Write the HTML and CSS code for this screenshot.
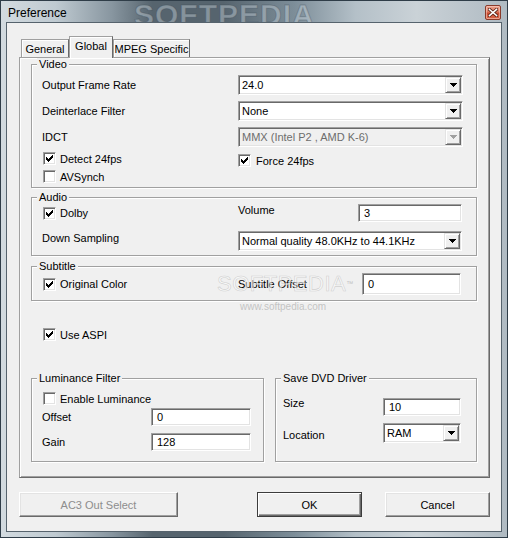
FILE: index.html
```html
<!DOCTYPE html>
<html>
<head>
<meta charset="utf-8">
<title>Preference</title>
<link rel="stylesheet" href="styles.css">
</head>
<body>
<div class="window">
  <div class="titlebar">
    <span class="title">Preference</span>
    <span class="wm-title">SOFTPEDIA</span>
    <span class="close">
      <svg width="10" height="9" viewBox="0 0 10 9"><path d="M1.5 1.5 L8.5 7.5 M8.5 1.5 L1.5 7.5" stroke="#5a2418" stroke-width="3.2" stroke-linecap="square"/><path d="M1.5 1.5 L8.5 7.5 M8.5 1.5 L1.5 7.5" stroke="#ffffff" stroke-width="1.6" stroke-linecap="square"/></svg>
    </span>
  </div>
  <div class="client">
    <div class="tabs">
      <div class="tab">General</div>
      <div class="tab active">Global</div>
      <div class="tab">MPEG Specific</div>
    </div>
    <div class="panel">
      <div class="group g-video">
        <div class="gtitle">Video</div>
        <div class="row r-first">
          <span class="lbl">Output Frame Rate</span>
          <div class="combo c-wide"><span class="val">24.0</span><span class="drop"><svg width="7" height="4" viewBox="0 0 7 4" shape-rendering="crispEdges"><path d="M0 0h7v1H0zM1 1h5v1H1zM2 2h3v1H2zM3 3h1v1H3z"/></svg></span></div>
        </div>
        <div class="row r-next">
          <span class="lbl">Deinterlace Filter</span>
          <div class="combo c-wide"><span class="val">None</span><span class="drop"><svg width="7" height="4" viewBox="0 0 7 4" shape-rendering="crispEdges"><path d="M0 0h7v1H0zM1 1h5v1H1zM2 2h3v1H2zM3 3h1v1H3z"/></svg></span></div>
        </div>
        <div class="row r-next">
          <span class="lbl">IDCT</span>
          <div class="combo c-wide disabled"><span class="val">MMX (Intel P2 , AMD K-6)</span><span class="drop"><svg width="7" height="4" viewBox="0 0 7 4" shape-rendering="crispEdges"><path d="M0 0h7v1H0zM1 1h5v1H1zM2 2h3v1H2zM3 3h1v1H3z"/></svg></span></div>
        </div>
        <div class="row r-checks">
          <div class="cell">
            <span class="chk"><span class="box"><svg width="9" height="9" viewBox="0 0 9 9" shape-rendering="crispEdges"><path d="M7 1h1v1H7zM6 2h2v1H6zM1 3h1v1H1zM5 3h3v1H5zM1 4h2v1H1zM4 4h3v1H4zM1 5h5v1H1zM2 6h3v1H2zM3 7h1v1H3z"/></svg></span>Detect 24fps</span>
          </div>
          <span class="chk force"><span class="box"><svg width="9" height="9" viewBox="0 0 9 9" shape-rendering="crispEdges"><path d="M7 1h1v1H7zM6 2h2v1H6zM1 3h1v1H1zM5 3h3v1H5zM1 4h2v1H1zM4 4h3v1H4zM1 5h5v1H1zM2 6h3v1H2zM3 7h1v1H3z"/></svg></span>Force 24fps</span>
        </div>
        <div class="row r-chk">
          <span class="chk indent"><span class="box"></span>AVSynch</span>
        </div>
      </div>

      <div class="group g-audio">
        <div class="gtitle">Audio</div>
        <div class="row r-vol">
          <div class="cell">
            <span class="chk"><span class="box"><svg width="9" height="9" viewBox="0 0 9 9" shape-rendering="crispEdges"><path d="M7 1h1v1H7zM6 2h2v1H6zM1 3h1v1H1zM5 3h3v1H5zM1 4h2v1H1zM4 4h3v1H4zM1 5h5v1H1zM2 6h3v1H2zM3 7h1v1H3z"/></svg></span>Dolby</span>
          </div>
          <span class="lbl-vol up">Volume</span>
          <div class="edit e-vol">3</div>
        </div>
        <div class="row r-ds">
          <span class="lbl up">Down Sampling</span>
          <div class="combo c-ds"><span class="val">Normal quality 48.0KHz to 44.1KHz</span><span class="drop"><svg width="7" height="4" viewBox="0 0 7 4" shape-rendering="crispEdges"><path d="M0 0h7v1H0zM1 1h5v1H1zM2 2h3v1H2zM3 3h1v1H3z"/></svg></span></div>
        </div>
      </div>

      <div class="group g-sub">
        <div class="gtitle">Subtitle</div>
        <div class="row r-sub">
          <div class="cell">
            <span class="chk"><span class="box"><svg width="9" height="9" viewBox="0 0 9 9" shape-rendering="crispEdges"><path d="M7 1h1v1H7zM6 2h2v1H6zM1 3h1v1H1zM5 3h3v1H5zM1 4h2v1H1zM4 4h3v1H4zM1 5h5v1H1zM2 6h3v1H2zM3 7h1v1H3z"/></svg></span>Original Color</span>
          </div>
          <span class="lbl-sub">Subtitle Offset</span>
          <div class="edit e-sub">0</div>
        </div>
      </div>

      <div class="aspi">
        <span class="chk"><span class="box"><svg width="9" height="9" viewBox="0 0 9 9" shape-rendering="crispEdges"><path d="M7 1h1v1H7zM6 2h2v1H6zM1 3h1v1H1zM5 3h3v1H5zM1 4h2v1H1zM4 4h3v1H4zM1 5h5v1H1zM2 6h3v1H2zM3 7h1v1H3z"/></svg></span>Use ASPI</span>
      </div>

      <div class="bottom">
        <div class="group g-lum">
          <div class="gtitle">Luminance Filter</div>
          <div class="row r-lumchk">
            <span class="chk indent"><span class="box"></span>Enable Luminance</span>
          </div>
          <div class="row r-off">
            <span class="lbl-lum">Offset</span>
            <div class="edit e-lum">0</div>
          </div>
          <div class="row r-gain">
            <span class="lbl-lum">Gain</span>
            <div class="edit e-lum">128</div>
          </div>
        </div>
        <div class="group g-dvd">
          <div class="gtitle">Save DVD Driver</div>
          <div class="row r-size">
            <span class="lbl-dvd up-more">Size</span>
            <div class="edit e-dvd">10</div>
          </div>
          <div class="row r-loc">
            <span class="lbl-dvd down">Location</span>
            <div class="combo c-loc"><span class="val">RAM</span><span class="drop"><svg width="7" height="4" viewBox="0 0 7 4" shape-rendering="crispEdges"><path d="M0 0h7v1H0zM1 1h5v1H1zM2 2h3v1H2zM3 3h1v1H3z"/></svg></span></div>
          </div>
        </div>
      </div>
    </div>

    <div class="buttons">
      <button class="btn btn-ac3" disabled>AC3 Out Select</button>
      <div class="btn-group">
        <button class="btn btn-ok">OK</button>
        <button class="btn btn-cancel">Cancel</button>
      </div>
    </div>

    <span class="wm-mid">SOFTPEDIA<sup>™</sup></span>
    <span class="wm-url">www.softpedia.com</span>
  </div>
</div>
</body>
</html>
```
FILE: styles.css
```css
html, body {
  margin: 0;
  padding: 0;
}
body {
  width: 508px;
  height: 538px;
  overflow: hidden;
  font-family: "Liberation Sans", Arial, sans-serif;
  font-size: 11px;
  color: #000;
}
.window {
  box-sizing: border-box;
  width: 508px;
  height: 538px;
  background: linear-gradient(90deg, #d3dbe0 0%, #bfcad1 11%, #8896a0 22%, #56646e 30%, #56646e 44%, #7d8e99 58%, #b4c0c8 70%, #cad2d7 82%, #afbac2 100%);
  box-shadow: inset 0 0 0 1px #2f3d48;
  display: flex;
  flex-direction: column;
}
.titlebar {
  position: relative;
  height: 22px;
  display: flex;
  align-items: center;
  overflow: hidden;
}
.title {
  margin: 4px 0 0 8px;
  font-size: 12px;
  color: #000;
  position: relative;
  z-index: 1;
}
.wm-title {
  position: absolute;
  left: 134px;
  top: 0px;
  font-size: 30px;
  line-height: 30px;
  font-weight: bold;
  letter-spacing: 1px;
  color: rgba(205, 216, 224, 0.42);
  -webkit-text-stroke: 1px rgba(60, 75, 86, 0.35);
}
.close {
  position: relative;
  z-index: 1;
  margin-left: auto;
  margin-right: 7px;
  align-self: flex-start;
  margin-top: 5px;
  box-sizing: border-box;
  width: 16px;
  height: 15px;
  border: 1px solid #8a3b2b;
  border-radius: 2px;
  background: linear-gradient(180deg, #eba28e 0%, #de7a60 45%, #c9492e 55%, #d8684c 100%);
  box-shadow: inset 0 0 0 1px rgba(255, 220, 210, 0.5);
  display: flex;
  align-items: center;
  justify-content: center;
}
.client {
  position: relative;
  box-sizing: border-box;
  height: 510px;
  margin: 0 6px 6px 6px;
  border: 1px solid #56636d;
  background: #f0f0f0;
}

/* tabs */
.tabs {
  display: flex;
  align-items: flex-end;
  height: 21px;
  margin: 13px 0 0 14px;
}
.tab {
  box-sizing: border-box;
  height: 18px;
  border: 1px solid #a0a0a0;
  border-right-color: #696969;
  border-bottom: none;
  box-shadow: inset 1px 1px 0 #fff;
  background: #f0f0f0;
  display: flex;
  align-items: center;
  justify-content: center;
  padding-top: 1px;
}
.tab:nth-child(1) { width: 48px; }
.tab:nth-child(2) { width: 44px; }
.tab:nth-child(3) { width: 77px; }
.tab.active {
  position: relative;
  z-index: 1;
  height: 22px;
  margin-bottom: -1px;
  padding-top: 0;
  padding-bottom: 4px;
}

.panel {
  box-sizing: border-box;
  width: 471px;
  height: 421px;
  margin-left: 12px;
  padding: 6px 0 0 11px;
  border: 1px solid;
  border-color: #a0a0a0 #696969 #696969 #a0a0a0;
  box-shadow: inset 1px 1px 0 #fff, inset -1px -1px 0 #a0a0a0;
  background: #f0f0f0;
}

/* group boxes */
.group {
  box-sizing: border-box;
  border: 1px solid #a0a0a0;
  box-shadow: 1px 1px 0 #fff, inset 1px 1px 0 #fff;
  width: 446px;
}
.gtitle {
  width: fit-content;
  height: 13px;
  line-height: 13px;
  margin: -7px 0 -6px -5px;
  padding: 0 2px;
  background: #f0f0f0;
}
.g-dvd .gtitle { margin-left: -2px; }
.g-video { padding: 0 13px 4px 10px; }
.g-audio { margin-top: 9px; padding: 0 13px 4px 10px; }
.g-sub { margin-top: 10px; padding: 0 13px 5px 10px; }

.row {
  display: flex;
  align-items: center;
}
.r-first { margin-top: 10px; height: 20px; }
.r-next { margin-top: 6px; height: 20px; }
.r-checks { margin-top: 5px; height: 18px; align-items: flex-start; }
.r-chk { height: 13px; }
.r-vol { margin-top: 6px; height: 18px; }
.r-ds { margin-top: 9px; height: 20px; }
.r-sub { margin-top: 6px; height: 22px; }

.lbl { width: 196px; flex: none; }
.cell { width: 196px; flex: none; }
.lbl-vol { width: 120px; flex: none; }
.lbl-sub { width: 124px; flex: none; }
.up { margin-bottom: 6px; }
.up-more { margin-bottom: 8px; }
.down { margin-top: 4px; }

/* checkbox */
.chk {
  display: flex;
  align-items: center;
  gap: 4px;
  height: 13px;
  white-space: nowrap;
}
.cell .chk, .indent { margin-left: 1px; }
.force { margin-top: 2px; gap: 5px; }
.box {
  box-sizing: border-box;
  width: 13px;
  height: 13px;
  flex: none;
  border: 1px solid;
  border-color: #a0a0a0 #fff #fff #a0a0a0;
  box-shadow: inset 1px 1px 0 #696969, inset -1px -1px 0 #e3e3e3;
  background: #fff;
  display: flex;
  align-items: center;
  justify-content: center;
}

/* combo box */
.combo {
  box-sizing: border-box;
  height: 20px;
  display: flex;
  align-items: center;
  padding: 1px;
  border: 1px solid;
  border-color: #a0a0a0 #fff #fff #a0a0a0;
  box-shadow: inset 1px 1px 0 #696969, inset -1px -1px 0 #e3e3e3;
  background: #fff;
}
.combo .val {
  flex: 1;
  padding-left: 2px;
  white-space: nowrap;
  overflow: hidden;
}
.drop {
  box-sizing: border-box;
  width: 16px;
  height: 16px;
  flex: none;
  border: 1px solid;
  border-color: #e3e3e3 #696969 #696969 #e3e3e3;
  box-shadow: inset 1px 1px 0 #fff, inset -1px -1px 0 #a0a0a0;
  background: #f0f0f0;
  display: flex;
  align-items: center;
  justify-content: center;
}
.drop svg { fill: #000; }
.combo.disabled { background: #f0f0f0; }
.combo.disabled .val { color: #6d6d6d; }
.combo.disabled .drop svg { fill: #a0a0a0; }
.c-wide { width: 225px; }
.c-ds { width: 224px; }
.c-loc { width: 78px; }

/* edit box */
.edit {
  box-sizing: border-box;
  display: flex;
  align-items: center;
  padding-left: 5px;
  border: 1px solid;
  border-color: #a0a0a0 #fff #fff #a0a0a0;
  box-shadow: inset 1px 1px 0 #696969, inset -1px -1px 0 #e3e3e3;
  background: #fff;
}
.e-vol { width: 104px; height: 18px; }
.e-sub { width: 99px; height: 22px; }
.e-lum { width: 100px; height: 18px; }
.e-dvd { width: 78px; height: 18px; }

/* use aspi */
.aspi {
  margin: 27px 0 0 12px;
  height: 13px;
}

/* bottom groups */
.bottom {
  display: flex;
  gap: 11px;
  margin-top: 37px;
}
.g-lum {
  width: 233px;
  height: 84px;
  padding: 0 0 0 10px;
}
.g-dvd {
  width: 202px;
  height: 84px;
  padding: 0 0 0 7px;
}
.r-lumchk { margin-top: 13px; height: 13px; }
.r-off { margin-top: 3px; height: 18px; }
.r-gain { margin-top: 7px; height: 18px; }
.lbl-lum { width: 109px; flex: none; }
.r-size { margin-top: 19px; height: 18px; }
.r-loc { margin-top: 7px; height: 20px; }
.lbl-dvd { width: 100px; flex: none; }

/* buttons */
.buttons {
  display: flex;
  justify-content: space-between;
  width: 471px;
  margin: 14px 0 0 12px;
}
.btn-group {
  display: flex;
  gap: 23px;
}
.btn {
  box-sizing: border-box;
  height: 25px;
  margin: 0;
  padding: 0;
  font-family: inherit;
  font-size: 11px;
  color: #000;
  background: #f0f0f0;
  border: 1px solid;
  border-color: #fff #696969 #696969 #fff;
  box-shadow: inset -1px -1px 0 #a0a0a0, inset 1px 1px 0 #e3e3e3;
  border-radius: 0;
}
.btn-ac3 { width: 159px; color: #8d8d8d; }
.btn-ok {
  width: 105px;
  border-color: #3c3c3c;
  box-shadow: inset 1px 1px 0 #fff, inset -1px -1px 0 #696969, inset -2px -2px 0 #a0a0a0;
}
.btn-cancel { width: 105px; }

/* watermarks over the dialog */
.wm-mid {
  position: absolute;
  left: 210px;
  top: 249px;
  font-size: 22px;
  line-height: 24px;
  letter-spacing: 0.5px;
  color: rgba(255, 255, 255, 0.55);
  -webkit-text-stroke: 0.6px rgba(175, 175, 175, 0.55);
  pointer-events: none;
}
.wm-mid sup {
  font-size: 7px;
  vertical-align: top;
  -webkit-text-stroke: 0;
  color: rgba(170, 170, 170, 0.7);
}
.wm-url {
  position: absolute;
  left: 233px;
  top: 278px;
  font-size: 10px;
  color: rgba(175, 175, 175, 0.7);
  pointer-events: none;
}
```
